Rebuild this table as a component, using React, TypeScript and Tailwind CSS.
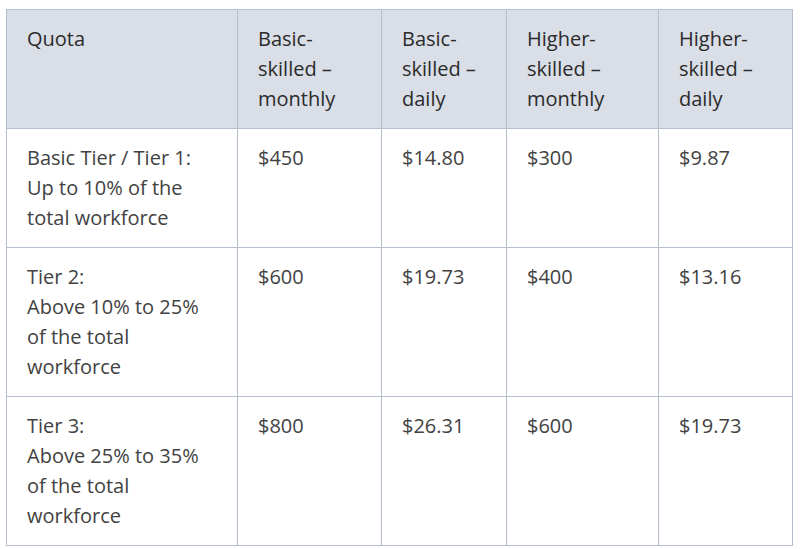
const HEADERS = [
  'Quota',
  'Basic-skilled – monthly',
  'Basic-skilled – daily',
  'Higher-skilled – monthly',
  'Higher-skilled – daily',
];

const ROWS = [
  {
    quota: ['Basic Tier / Tier 1: Up to 10% of the total workforce'],
    values: ['$450', '$14.80', '$300', '$9.87'],
  },
  {
    quota: ['Tier 2:', 'Above 10% to 25% of the total workforce'],
    values: ['$600', '$19.73', '$400', '$13.16'],
  },
  {
    quota: ['Tier 3:', 'Above 25% to 35% of the total workforce'],
    values: ['$800', '$26.31', '$600', '$19.73'],
  },
];

const WIDTHS = ['w-[231px]', 'w-[144px]', 'w-[125px]', 'w-[152px]', 'w-[134px]'];

export default function App() {
  return (
    <div className="min-h-[549px] bg-white pl-[6px] pt-[9px]" style={{ fontFamily: '"Open Sans", sans-serif' }}>
      <table className="table-fixed border-collapse w-[787px] text-[20px] leading-[30px]">
        <colgroup>
          {WIDTHS.map((w, i) => (
            <col key={i} className={w} />
          ))}
        </colgroup>
        <thead>
          <tr className="bg-[#d9dee7]">
            {HEADERS.map((h, i) => (
              <th
                key={i}
                className="border border-[#b4bfcb] px-[20px] pt-[14px] pb-[14px] text-left align-top font-normal text-[#2b2b2b] break-words"
              >
                {h.replace('-skilled', '-\u200Bskilled')}
              </th>
            ))}
          </tr>
        </thead>
        <tbody>
          {ROWS.map((row, idx) => (
            <tr key={idx}>
              <td className="border border-[#b4bfcb] px-[20px] py-[14px] align-top text-[#424242]">
                {row.quota.map((line, j) => (
                  <div key={j}>{line}</div>
                ))}
              </td>
              {row.values.map((v, j) => (
                <td key={j} className="border border-[#b4bfcb] px-[20px] py-[14px] align-top text-[#424242]">
                  {v}
                </td>
              ))}
            </tr>
          ))}
        </tbody>
      </table>
    </div>
  );
}
